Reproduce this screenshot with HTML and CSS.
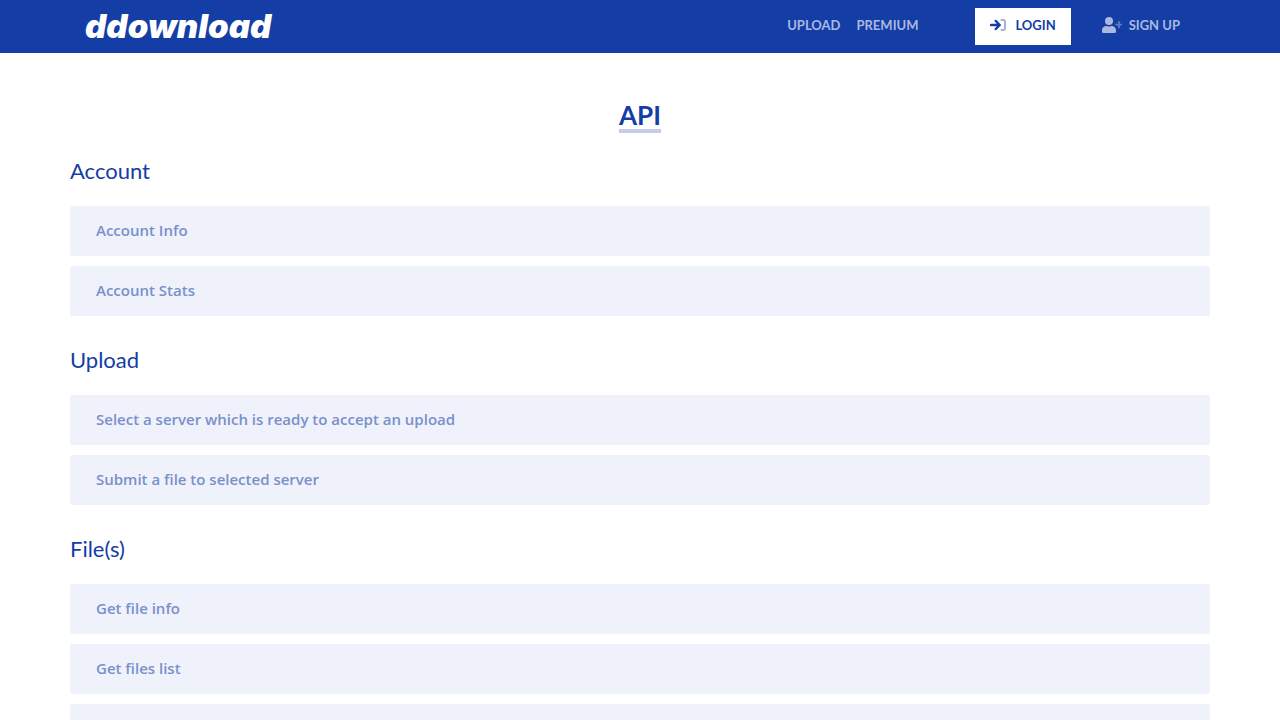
FILE: index.html
```html
<!DOCTYPE html>
<html lang="en">
<head>
    <meta charset="UTF-8">
    <meta name="viewport" content="width=device-width, initial-scale=1.0">
    <title>API - ddownload</title>
    <link rel="stylesheet" href="styles.css">
</head>
<body>
    <header class="header">
        <div class="header-inner">
            <a href="#" class="logo">d<span class="logo-front">d</span>ownload</a>
            <nav>
                <ul class="menu">
                    <li><a href="#">UPLOAD</a></li>
                    <li><a href="#">PREMIUM</a></li>
                </ul>
                <a href="#" class="login">
                    <svg width="16" height="16" viewBox="0 0 16 16" aria-hidden="true">
                        <path d="M11.500 3H13a2 2 0 0 1 2 2v6a2 2 0 0 1-2 2h-1.500" fill="none" stroke="#a1b1db" stroke-width="2" stroke-linecap="round"/>
                        <path d="M1 8h8M5.800 4L9.700 8l-3.900 4" fill="none" stroke="#143da6" stroke-width="2.500" stroke-linecap="round" stroke-linejoin="round"/>
                    </svg>
                    LOGIN
                </a>
                <a href="#" class="signup">
                    <svg width="20" height="16" viewBox="0 0 20 16" aria-hidden="true">
                        <circle cx="7" cy="4" r="4" fill="#a9b9e1"/>
                        <path d="M0 14.500v-1.300C0 10.900 1.900 9 4.200 9h.5a5.500 5.500 0 0 0 4.600 0h.5c2.300 0 4.200 1.900 4.200 4.200v1.300a1.500 1.500 0 0 1-1.500 1.500h-11A1.500 1.500 0 0 1 0 14.500z" fill="#a9b9e1"/>
                        <path d="M17 5v5.500M14.200 7.700h5.500" stroke="#5f7bc3" stroke-width="1.800" stroke-linecap="round"/>
                    </svg>
                    SIGN UP
                </a>
            </nav>
        </div>
    </header>
    <main class="container">
        <h1 class="title"><span>API</span></h1>

        <section class="group">
            <h2>Account</h2>
            <button type="button" class="panel">Account Info</button>
            <button type="button" class="panel">Account Stats</button>
        </section>

        <section class="group">
            <h2>Upload</h2>
            <button type="button" class="panel">Select a server which is ready to accept an upload</button>
            <button type="button" class="panel">Submit a file to selected server</button>
        </section>

        <section class="group">
            <h2>File(s)</h2>
            <button type="button" class="panel">Get file info</button>
            <button type="button" class="panel">Get files list</button>
            <div class="panel"></div>
        </section>
    </main>
</body>
</html>
```

FILE: styles.css
```css
* {
    box-sizing: border-box;
}
body {
    margin: 0;
    background: white;
    color: #143da6;
    font-family: Lato, sans-serif;
}
a {
    text-decoration: none;
}
.header {
    background: #143da6;
}
.header-inner {
    display: flex;
    justify-content: space-between;
    align-items: center;
    max-width: 1140px;
    margin: 0 auto;
    padding: 8px 15px;
}
.logo {
    color: white;
    font-family: Inter, sans-serif;
    font-size: 33px;
    line-height: 37px;
    font-weight: 900;
    font-style: italic;
}
/* blue outline cuts into the first d */
.logo-front {
    -webkit-text-stroke: 3px #143da6;
    paint-order: stroke fill;
}
nav {
    display: flex;
    align-items: center;
    font-size: 13px;
    line-height: 20px;
    font-weight: bold;
}
.menu {
    display: flex;
    gap: 16px;
    list-style: none;
    margin: 0 57px 0 0;
    padding: 7px 0 10px;
}
.menu a, .signup {
    color: #a9b9e1;
}
.login, .signup {
    display: flex;
    align-items: center;
    padding: 7px 15px 10px;
}
.login {
    gap: 9px;
    margin-right: 16px;
    background: white;
    color: #143da6;
}
.signup {
    gap: 7px;
}

.container {
    max-width: 1170px;
    margin: 0 auto;
    padding: 46px 15px;
}
.title {
    margin: 0 0 24px;
    font-size: 26px;
    line-height: 32px;
    text-align: center;
}
.title span {
    display: inline-block;
    border-bottom: 4px solid #c4ceea;
    line-height: 28px;
}
.group {
    margin-bottom: 30px;
}
.group h2 {
    margin: 0 0 22px;
    font-size: 22px;
    line-height: 27px;
    font-weight: normal;
}
.panel {
    display: block;
    width: 100%;
    height: 50px;
    margin-bottom: 10px;
    padding: 0 26px 2px;
    border: none;
    border-radius: 2px;
    background: #eff2fb;
    color: #7a90cb;
    font-family: "Open Sans", sans-serif;
    font-size: 15px;
    font-weight: 600;
    text-align: left;
    cursor: pointer;
}
```
